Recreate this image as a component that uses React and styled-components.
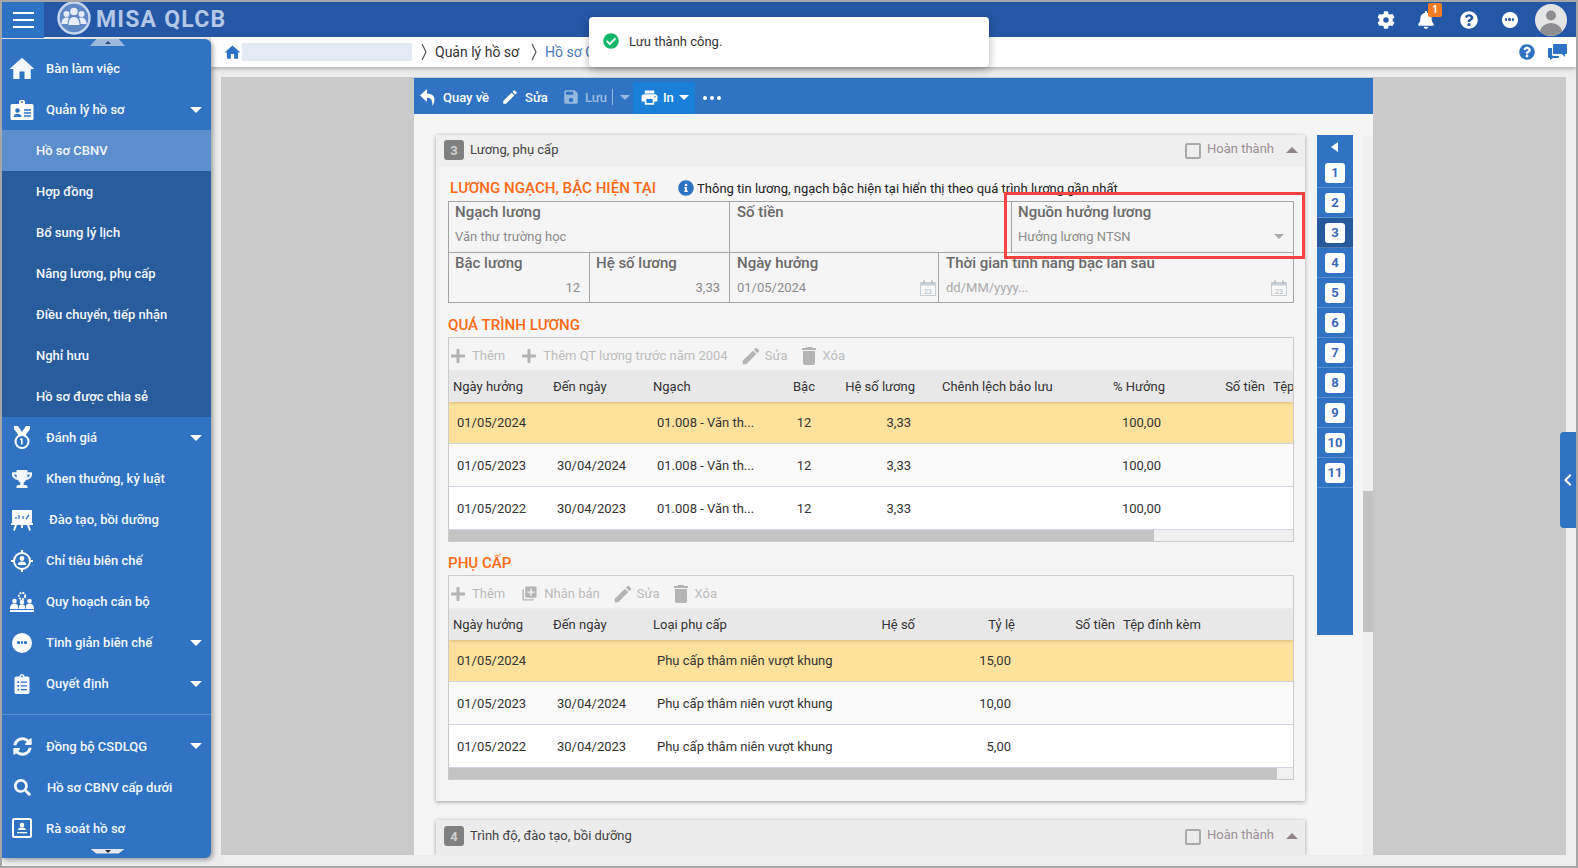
import styled, { createGlobalStyle } from "styled-components";
import {
  MdHome, MdEdit, MdSave, MdPrint, MdDelete, MdLibraryAdd, MdChevronLeft,
} from "react-icons/md";
import {
  FaTrophy, FaClipboardList, FaSyncAlt, FaSearch,
  FaPlus, FaCog, FaBell, FaQuestionCircle, FaCheckCircle, FaInfoCircle,
} from "react-icons/fa";

const GlobalStyle = createGlobalStyle`
  html, body { margin: 0; padding: 0; background: #fff; }
  body { font-family: Roboto, "Noto Sans", Arial, sans-serif; font-size: 13px; color: #333; }
  * { box-sizing: border-box; }
`;

const Frame = styled.div`
  width: 1578px;
  height: 868px;
  border: 2px solid #a6a6a6;
  display: flex;
  flex-direction: column;
  position: relative;
  overflow: hidden;
  background: #ededed;
`;

const Header = styled.header`
  height: 35px;
  flex: none;
  background: #2557a7;
  display: flex;
  align-items: flex-start;
  position: relative;
  z-index: 3;
`;

const Burger = styled.button`
  width: 42px;
  height: 36px;
  border: 0;
  padding: 0;
  background: #2e72c3;
  display: flex;
  flex-direction: column;
  align-items: center;
  justify-content: center;
  gap: 5px;
  span { width: 21px; height: 2px; background: #fff; }
`;

const Logo = styled.div`
  display: flex;
  align-items: center;
  height: 35px;
  margin-left: 13px;
  gap: 5px;
  font-size: 23px;
  font-weight: 700;
  letter-spacing: 1.2px;
  color: #b3c7e6;
  svg { margin-top: -3px; }
`;

const HeaderIcons = styled.div`
  margin-left: auto;
  display: flex;
  align-items: center;
  height: 35px;
  padding-right: 3px;
  color: #fff;
`;

const HeadIcon = styled.span`
  width: ${(p) => p.$w}px;
  display: flex;
  justify-content: center;
  position: relative;
`;

const CountBadge = styled.span`
  position: absolute;
  top: -8px;
  left: 24px;
  width: 14px;
  height: 14px;
  border-radius: 2px;
  background: #f47b20;
  color: #fff;
  font-size: 10px;
  font-weight: 700;
  text-align: center;
  line-height: 14px;
`;

const RoundDots = styled.span`
  width: ${(p) => p.$size}px;
  height: ${(p) => p.$size}px;
  border-radius: 50%;
  background: ${(p) => p.$bg};
  display: flex;
  align-items: center;
  justify-content: center;
  gap: 1px;
  i { width: 2.4px; height: 2.4px; border-radius: 50%; background: ${(p) => p.$fg}; }
`;

const Body = styled.div`
  flex: 1;
  display: flex;
  min-height: 0;
`;

const Sidebar = styled.nav`
  width: 209px;
  height: 819px;
  margin-top: 2px;
  flex: none;
  background: #2f73c2;
  color: #fff;
  border-radius: 0 6px 6px 0;
  box-shadow: 2px 2px 5px rgba(0, 0, 0, 0.35);
  position: relative;
  z-index: 2;
`;

const Scroller = styled.div`
  height: ${(p) => (p.$up ? 9 : 6)}px;
  display: flex;
  justify-content: center;
  align-items: flex-start;
  div {
    width: 35px;
    height: ${(p) => (p.$up ? 7 : 5)}px;
    background: ${(p) => (p.$up ? "#9cb8dc" : "#e4e8ee")};
    clip-path: ${(p) =>
      p.$up ? "polygon(18% 0, 82% 0, 100% 100%, 0 100%)" : "polygon(0 0, 100% 0, 82% 100%, 18% 100%)"};
    display: flex;
    align-items: center;
    justify-content: center;
    margin-left: 2px;
  }
  div::after {
    content: "";
    border-left: 3px solid transparent;
    border-right: 3px solid transparent;
    ${(p) => (p.$up ? "border-bottom: 3px solid #2a4a78;" : "border-top: 3px solid #2a2a2a;")}
  }
`;

const MenuRow = styled.div`
  height: 41px;
  display: flex;
  align-items: center;
  padding-right: 9px;
  font-size: 13px;
  font-weight: 500;
  color: #f4f8fd;
`;

const MenuIcon = styled.span`
  width: 40px;
  margin-right: 4px;
  display: flex;
  justify-content: center;
  align-items: center;
  flex: none;
`;

const MenuLabel = styled.span`
  margin-left: ${(p) => p.$nudge || 0}px;
`;

const Caret = styled.span`
  margin-left: auto;
  border-left: 6px solid transparent;
  border-right: 6px solid transparent;
  border-top: 6px solid #fff;
`;

const SubMenu = styled.div`
  background: #285c9c;
`;

const SubRow = styled.div`
  height: 41px;
  display: flex;
  align-items: center;
  padding-left: 34px;
  font-weight: 500;
  color: #f4f8fd;
  background: ${(p) => (p.$active ? "#5c8dcd" : "transparent")};
`;

const MenuDivider = styled.div`
  height: 1px;
  margin: 10px 0 10.5px;
  background: #5a8fce;
`;

const Main = styled.main`
  flex: 1;
  display: flex;
  flex-direction: column;
  min-width: 0;
`;

const Breadcrumb = styled.div`
  height: 30px;
  flex: none;
  background: #fff;
  box-shadow: 0 2px 4px rgba(0, 0, 0, 0.25);
  display: flex;
  align-items: center;
  padding: 0 9px 0 12px;
  color: #333;
  position: relative;
  z-index: 1;
`;

const Blurred = styled.div`
  width: 170px;
  height: 18px;
  margin: 0 9px 0 0;
  background: #e4eaf4;
`;

const Crumb = styled.span`
  margin: 0 12px 0 8px;
  font-size: 14px;
  color: ${(p) => p.$color};
`;

const CrumbTools = styled.div`
  margin-left: auto;
  display: flex;
  align-items: center;
  gap: 13px;
  color: #2e72c3;
`;

const Workspace = styled.div`
  flex: 1;
  min-height: 0;
  padding: 10px 10px 11px;
`;

const GrayArea = styled.div`
  height: 100%;
  background: #cacaca;
  padding-top: 1px;
  display: flex;
  justify-content: center;
`;

const Paper = styled.div`
  width: 959px;
  height: 777px;
  background: #f5f5f5;
  display: flex;
  flex-direction: column;
`;

const PaperBar = styled.div`
  height: 36px;
  flex: none;
  background: #2f73c2;
  display: flex;
  align-items: flex-end;
  padding-left: 5px;
  color: #fff;
`;

const BarBtn = styled.div`
  height: 32px;
  display: flex;
  align-items: center;
  gap: ${(p) => p.$gap ?? 6}px;
  margin-right: ${(p) => p.$mr ?? 0}px;
  padding: ${(p) => (p.$on ? "0 6px 2px 7px" : "0 0 2px")};
  background: ${(p) => (p.$on ? "#1a7fd9" : "transparent")};
  opacity: ${(p) => (p.$dim ? 0.5 : 1)};
  font-weight: 500;
`;

const BarCaret = styled.span`
  border-left: 5px solid transparent;
  border-right: 5px solid transparent;
  border-top: 5px solid #fff;
  margin-left: ${(p) => p.$ml || 0}px;
`;

const BarSep = styled.span`
  width: 1px;
  height: 16px;
  background: #fff;
`;

const BarDots = styled.div`
  height: 32px;
  display: flex;
  align-items: center;
  gap: 3px;
  margin-left: 8px;
  padding-bottom: 1px;
  i { width: 4px; height: 4px; border-radius: 50%; background: #fff; }
`;

const PaperBody = styled.div`
  flex: 1;
  min-height: 0;
  overflow: hidden;
  display: flex;
  align-items: flex-start;
  padding: 21px 0 0 22px;
`;

const CardColumn = styled.div`
  width: 869px;
  flex: none;
  position: relative;
`;

const Card = styled.section`
  background: #f5f5f5;
  box-shadow: 0 1px 4px rgba(0, 0, 0, 0.35);
  margin-bottom: 19px;
`;

const CardHead = styled.div`
  height: ${(p) => p.$h}px;
  background: ${(p) => p.$bg};
  display: flex;
  align-items: center;
  padding: 0 7px ${(p) => p.$pb}px 8px;
`;

const NumBadge = styled.span`
  width: 20px;
  height: 20px;
  border-radius: 3px;
  background: #808080;
  color: #d0d0d0;
  font-weight: 700;
  font-size: 13px;
  display: flex;
  align-items: center;
  justify-content: center;
  margin-right: 6px;
`;

const CardTitle = styled.span`
  color: #444;
  margin-top: -2px;
`;

const Done = styled.div`
  margin-left: auto;
  display: flex;
  align-items: center;
  color: #9a8f96;
  span { margin: 0 12px 0 6px; position: relative; top: -2px; }
`;

const Check = styled.i`
  width: 16px;
  height: 16px;
  margin-top: 2px;
  border: 2px solid #aaa;
  border-radius: 2px;
  display: block;
`;

const CaretUp = styled.i`
  border-left: 6px solid transparent;
  border-right: 6px solid transparent;
  border-bottom: 6px solid #90868a;
`;

const CardBody = styled.div`
  padding: 0 11px 21px 12px;
`;

const InfoRow = styled.div`
  height: 34px;
  padding: 8px 0 0 2px;
  display: flex;
  align-items: center;
`;

const SectionTitle = styled.h3`
  margin: 0;
  font-size: 15.1px;
  font-weight: 500;
  color: #ff6a13;
  white-space: nowrap;
`;

const SectionBar = styled.div`
  height: ${(p) => p.$h}px;
  padding-top: ${(p) => p.$pt}px;
  display: flex;
  align-items: center;
`;

const InfoNote = styled.div`
  margin-left: 22px;
  display: flex;
  align-items: center;
  gap: 3px;
  color: #222;
  svg { color: #2e72c3; }
`;

const FieldBox = styled.div`
  border: 1px solid #a4a4a4;
  border-bottom: 0;
`;

const FieldRow = styled.div`
  display: grid;
  grid-template-columns: ${(p) => p.$cols};
  height: 51px;
  border-bottom: 1px solid #a4a4a4;
  &:last-child { height: 50px; }
`;

const Field = styled.div`
  padding: 0 ${(p) => (p.$tight ? 2 : 6)}px 0 ${(p) => (p.$wide ? 7 : 6)}px;
  border-left: ${(p) => (p.$first ? "0" : "1px solid #a4a4a4")};
`;

const FieldLabel = styled.div`
  height: 22px;
  line-height: 21px;
  font-size: 15px;
  font-weight: 500;
  color: #6a6a6a;
  white-space: nowrap;
`;

const FieldValue = styled.div`
  height: 25px;
  display: flex;
  align-items: center;
  justify-content: ${(p) => (p.$right ? "flex-end" : "space-between")};
  padding-right: ${(p) => (p.$right ? 3 : 0)}px;
  color: ${(p) => (p.$faint ? "#aaa" : "#8c8c8c")};
`;

const SelectCaret = styled.i`
  border-left: 5px solid transparent;
  border-right: 5px solid transparent;
  border-top: 5px solid #aaa;
  margin-right: 3px;
`;

const Grid = styled.div`
  border: 1px solid #cbcbcb;
  overflow: hidden;
`;

const GridTools = styled.div`
  height: 33px;
  display: flex;
  align-items: center;
  padding: 2px 0 0 1px;
  color: #bcbcbc;
  svg { color: #b4b4b4; }
`;

const GridTool = styled.span`
  display: flex;
  align-items: center;
  gap: 6px;
  margin-right: 14px;
  &:first-child { margin-right: 16px; }
  &:nth-child(3) { margin-right: 13px; gap: 5px; }
`;

const PencilIcon = styled(MdEdit)`
  margin: 0 -2px;
`;

const TrashIcon = styled(MdDelete)`
  margin: 0 -4px;
`;

const GridHead = styled.div`
  height: 31px;
  display: grid;
  grid-template-columns: ${(p) => p.$cols};
  align-items: center;
  background: #e8e8e8;
  color: #333;
  white-space: nowrap;
  position: relative;
  box-shadow: 0 1px 3px rgba(120, 90, 30, 0.3);
`;

const HeadCell = styled.div`
  padding: 0 4px 0 ${(p) => p.$pl ?? 4}px;
  text-align: ${(p) => p.$align || "left"};
`;

const GridRow = styled.div`
  height: ${(p) => (p.$first ? 42 : 43)}px;
  display: grid;
  grid-template-columns: ${(p) => p.$cols};
  align-items: center;
  background: ${(p) => p.$bg};
  border-bottom: 1px solid #cfd6e2;
  color: #333;
  white-space: nowrap;
`;

const Cell = styled.div`
  padding: 0 ${(p) => (p.$flush ? 0 : 8)}px;
  text-align: ${(p) => p.$align || "left"};
`;

const HScroll = styled.div`
  height: 11px;
  background: #f0f0f0;
  div { height: 100%; width: ${(p) => p.$thumb}px; background: #c4c4c4; }
`;

const SectionNav = styled.aside`
  width: 36px;
  height: 500px;
  flex: none;
  margin-left: 12px;
  background: #2f73c2;
`;

const NavBack = styled.div`
  height: 23px;
  display: flex;
  align-items: center;
  justify-content: center;
  i {
    border-top: 5.5px solid transparent;
    border-bottom: 5.5px solid transparent;
    border-right: 7px solid #fff;
    margin-left: -2px;
  }
`;

const NavItem = styled.div`
  height: 30px;
  display: flex;
  align-items: center;
  justify-content: center;
  background: ${(p) => (p.$active ? "#265a9c" : "transparent")};
  border-bottom: 1px solid rgba(255, 255, 255, 0.2);
  span {
    width: 20px;
    height: 20px;
    border-radius: 3px;
    background: #fff;
    color: #3a68bb;
    font-weight: 700;
    font-size: 13px;
    display: flex;
    align-items: center;
    justify-content: center;
  }
`;

const ScrollStrip = styled.div`
  width: 10px;
  height: 720px;
  flex: none;
  margin: 0 0 0 10px;
  background: #f0f0f0;
  div { margin-top: 356px; height: 141px; background: #c3c3c3; }
`;

const Toast = styled.div`
  position: absolute;
  left: 587px;
  top: 15px;
  width: 400px;
  height: 50px;
  background: #fff;
  border-radius: 4px;
  box-shadow: 0 3px 10px rgba(0, 0, 0, 0.3);
  display: flex;
  align-items: center;
  gap: 10px;
  padding: 0 14px 2px;
  color: #333;
  z-index: 5;
  svg { color: #12b76a; }
`;

const RedBox = styled.div`
  position: absolute;
  left: 568px;
  top: 57px;
  width: 301px;
  height: 67px;
  border: 3px solid #f84242;
  pointer-events: none;
`;

const SideTab = styled.div`
  position: absolute;
  right: 0;
  top: 430px;
  width: 16px;
  height: 96px;
  background: #2f73c2;
  border-radius: 4px 0 0 4px;
  display: flex;
  align-items: center;
  justify-content: center;
  color: #fff;
  z-index: 4;
  svg { flex: none; }
`;

const BackArrow = () => (
  <svg width="18" height="20" viewBox="0 0 18 20" fill="#fff">
    <path d="M8 2 1 8.500 8 15v-4.200c3.500 0 5.500 1.500 5.500 8.200 3.500-6 3-12-5.500-12.500z" />
  </svg>
);

const IdCardIcon = () => (
  <svg width="24" height="22" viewBox="0 0 24 22">
    <path d="M9 5V2.500C9 1.500 10 1 12 1s3 .5 3 1.500V5h7a1.500 1.500 0 0 1 1.500 1.500v13A1.500 1.500 0 0 1 22 21H2a1.500 1.500 0 0 1-1.500-1.500v-13A1.500 1.500 0 0 1 2 5z" fill="#fff" />
    <circle cx="7.500" cy="11.500" r="2.300" fill="#2f73c2" />
    <path d="M3.500 18c.2-2.500 2-3.200 4-3.200s3.800.7 4 3.200z" fill="#2f73c2" />
    <path d="M14 11h7M14 14h7M14 17h7" stroke="#2f73c2" strokeWidth="1.300" />
    <circle cx="12" cy="3" r="1" fill="#2f73c2" />
  </svg>
);

const BoardIcon = () => (
  <svg width="22" height="22" viewBox="0 0 22 22">
    <rect x="1" y="1" width="20" height="13" rx="1" fill="#fff" />
    <path d="M5 10V8M8 10V6M12 10V7M15 10l3-4" stroke="#2f73c2" strokeWidth="1.300" />
    <rect x="0" y="14" width="22" height="2" fill="#fff" />
    <path d="M5 16l-2 5.500M17 16l2 5.500M11 16v3" stroke="#fff" strokeWidth="2" />
  </svg>
);

const TargetIcon = () => (
  <svg width="22" height="22" viewBox="0 0 22 22" fill="none">
    <circle cx="11" cy="11" r="8" stroke="#fff" strokeWidth="2" />
    <path d="M11 0v4M11 18v4M0 11h4M18 11h4" stroke="#fff" strokeWidth="2" />
    <circle cx="11" cy="8.500" r="2.400" fill="#fff" />
    <path d="M6.800 15c.3-2.800 2-3.600 4.200-3.600s3.900.8 4.200 3.600z" fill="#fff" />
  </svg>
);

const PlanIcon = () => (
  <svg width="24" height="22" viewBox="0 0 24 22" fill="#fff">
    <circle cx="12" cy="5" r="3.200" fill="none" stroke="#fff" strokeWidth="2" strokeDasharray="2 1" />
    <circle cx="4.500" cy="10" r="2.300" />
    <circle cx="19.500" cy="10" r="2.300" />
    <circle cx="12" cy="11" r="2.300" />
    <path d="M0 18c0-4 2-5.500 4.500-5.500S8 14 8 16v2zM16 18v-2c0-2 1-3.500 3.500-3.500S24 14 24 18zM8.500 18c0-3 1-4.800 3.500-4.800s3.500 1.800 3.500 4.800z" />
    <rect x="0" y="19" width="24" height="2" />
  </svg>
);

const MedalIcon = () => (
  <svg width="20" height="24" viewBox="0 0 20 24" fill="none">
    <path d="M2 0h4l4 6 4-6h4v3l-5 7H7L2 3z" fill="#fff" />
    <circle cx="10" cy="15.500" r="6.500" stroke="#fff" strokeWidth="2" />
    <path d="M9.800 12.500v6M8.300 13.800l1.500-1.300" stroke="#fff" strokeWidth="1.600" />
  </svg>
);

const ReviewIcon = () => (
  <svg width="20" height="20" viewBox="0 0 20 20" fill="none">
    <rect x="1" y="1" width="18" height="18" rx="1.500" stroke="#fff" strokeWidth="2" />
    <circle cx="10" cy="7" r="2.300" fill="#fff" />
    <path d="M6 12c.3-2 2-2.500 4-2.500s3.700.5 4 2.500zM5 14h10v1.300H5z" fill="#fff" />
  </svg>
);

const LogoMark = () => (
  <svg width="34" height="34" viewBox="0 0 34 34">
    <circle cx="17" cy="17" r="15.500" fill="#5f88c6" stroke="#c6d6ec" strokeWidth="2.500" />
    <g fill="#e6edf7">
      <circle cx="9.500" cy="13" r="3" />
      <circle cx="24.500" cy="13" r="3" />
      <circle cx="17" cy="10.500" r="3.800" />
      <path d="M4.500 23c0-4 2-6.500 5-6.500 1 0 2 .3 2.500 .8-1 1.500-1.500 3.500-1.500 5.700zM29.500 23c0-4-2-6.500-5-6.500-1 0-2 .3-2.500 .8 1 1.500 1.500 3.500 1.500 5.700zM11.500 24c0-5 2-8 5.500-8s5.500 3 5.500 8z" />
    </g>
  </svg>
);

const CalendarIcon = () => (
  <svg width="16" height="16" viewBox="0 0 16 16" fill="none">
    <rect x="0.500" y="2.500" width="15" height="13" stroke="#c8ced4" fill="#f8f8f8" />
    <rect x="0.500" y="2.500" width="15" height="3" fill="#c8ced4" />
    <path d="M4 0.500v3M12 0.500v3" stroke="#aeb4ba" strokeWidth="1.500" />
    <text x="8" y="13.500" fontSize="7" textAnchor="middle" fill="#aeb4ba" fontFamily="Roboto, sans-serif">23</text>
  </svg>
);

const CrumbArrow = ({ color }) => (
  <svg width="6" height="18" viewBox="0 0 6 18" fill="none">
    <path d="M1 1l4 8-4 8" stroke={color} strokeWidth="1.200" />
  </svg>
);

const ChatIcon = () => (
  <svg width="19" height="16" viewBox="0 0 19 16" fill="#2e72c3">
    <path d="M6 0h12a1 1 0 0 1 1 1v8a1 1 0 0 1-1 1h-1v3l-3-3H6a1 1 0 0 1-1-1V1a1 1 0 0 1 1-1z" />
    <path d="M1 4h3v6.500A1.500 1.500 0 0 0 5.500 12H11v1a1 1 0 0 1-1 1H5l-3 2v-2H1a1 1 0 0 1-1-1V5a1 1 0 0 1 1-1z" />
  </svg>
);

const AvatarIcon = () => (
  <svg width="32" height="32" viewBox="0 0 32 32">
    <defs>
      <clipPath id="avatarClip"><circle cx="16" cy="16" r="16" /></clipPath>
    </defs>
    <g clipPath="url(#avatarClip)">
      <rect width="32" height="32" fill="#e4e4e4" />
      <circle cx="16" cy="11.500" r="5" fill="#8e8e92" />
      <ellipse cx="16" cy="28" rx="11" ry="9" fill="#8e8e92" />
    </g>
  </svg>
);

const mainMenuTop = [
  { label: "Đánh giá", icon: <MedalIcon />, caret: true },
  { label: "Khen thưởng, kỷ luật", icon: <FaTrophy size={20} /> },
  { label: "Đào tạo, bồi dưỡng", icon: <BoardIcon />, nudge: 3 },
  { label: "Chỉ tiêu biên chế", icon: <TargetIcon /> },
  { label: "Quy hoạch cán bộ", icon: <PlanIcon /> },
  {
    label: "Tinh giản biên chế",
    icon: <RoundDots $size={20} $bg="#fff" $fg="#2f73c2"><i /><i /><i /></RoundDots>,
    caret: true,
  },
  { label: "Quyết định", icon: <FaClipboardList size={20} />, caret: true },
];

const mainMenuBottom = [
  { label: "Đồng bộ CSDLQG", icon: <FaSyncAlt size={19} />, caret: true },
  { label: "Hồ sơ CBNV cấp dưới", icon: <FaSearch size={17} />, nudge: 1 },
  { label: "Rà soát hồ sơ", icon: <ReviewIcon /> },
];

const subMenu = [
  "Hồ sơ CBNV", "Hợp đồng", "Bổ sung lý lịch", "Nâng lương, phụ cấp",
  "Điều chuyển, tiếp nhận", "Nghỉ hưu", "Hồ sơ được chia sẻ",
];

const salaryCols = "100px 100px 140px 30px 100px 150px 100px 100px 120px";
const allowanceCols = "100px 100px 211px 59px 100px 100px 174px";

const salaryRows = [
  ["01/05/2024", "", "#fee29c"],
  ["01/05/2023", "30/04/2024", "#fafafa"],
  ["01/05/2022", "30/04/2023", "#fff"],
];

const allowanceRows = [
  ["01/05/2024", "", "15,00", "#fee29c"],
  ["01/05/2023", "30/04/2024", "10,00", "#fafafa"],
  ["01/05/2022", "30/04/2023", "5,00", "#fff"],
];

const MenuItem = ({ item }) => (
  <MenuRow>
    <MenuIcon>{item.icon}</MenuIcon>
    <MenuLabel $nudge={item.nudge}>{item.label}</MenuLabel>
    {item.caret && <Caret />}
  </MenuRow>
);

const App = () => {
  return (
    <>
      <GlobalStyle />
      <Frame>
        <Header>
          <Burger><span /><span /><span /></Burger>
          <Logo><LogoMark />MISA QLCB</Logo>
          <HeaderIcons>
            <HeadIcon $w={37}><FaCog size={18} /></HeadIcon>
            <HeadIcon $w={43}>
              <FaBell size={18} />
              <CountBadge>1</CountBadge>
            </HeadIcon>
            <HeadIcon $w={44}><FaQuestionCircle size={18} /></HeadIcon>
            <HeadIcon $w={37}><RoundDots $size={16} $bg="#fff" $fg="#2557a7"><i /><i /><i /></RoundDots></HeadIcon>
            <HeadIcon $w={45}><AvatarIcon /></HeadIcon>
          </HeaderIcons>
        </Header>
        <Body>
          <Sidebar>
            <Scroller $up><div /></Scroller>
            <MenuItem item={{ label: "Bàn làm việc", icon: <MdHome size={30} /> }} />
            <MenuItem item={{ label: "Quản lý hồ sơ", icon: <IdCardIcon />, caret: true }} />
            <SubMenu>
              {subMenu.map((name, i) => (
                <SubRow key={name} $active={i === 0}>{name}</SubRow>
              ))}
            </SubMenu>
            {mainMenuTop.map((item) => <MenuItem key={item.label} item={item} />)}
            <MenuDivider />
            {mainMenuBottom.map((item) => <MenuItem key={item.label} item={item} />)}
            <Scroller><div /></Scroller>
          </Sidebar>
          <Main>
            <Breadcrumb>
              <MdHome size={19} color="#2e72c3" />
              <Blurred />
              <CrumbArrow color="#555" />
              <Crumb $color="#333">Quản lý hồ sơ</Crumb>
              <CrumbArrow color="#555" />
              <Crumb $color="#4a78c0">Hồ sơ CBNV</Crumb>
              <CrumbTools>
                <FaQuestionCircle size={16} />
                <ChatIcon />
              </CrumbTools>
            </Breadcrumb>
            <Workspace>
              <GrayArea>
                <Paper>
                  <PaperBar>
                    <BarBtn $mr={12}><BackArrow />Quay về</BarBtn>
                    <BarBtn $mr={14}><MdEdit size={18} />Sửa</BarBtn>
                    <BarBtn $dim $mr={3} $gap={5}>
                      <MdSave size={18} />Lưu
                      <BarSep />
                      <BarCaret $ml={2} />
                    </BarBtn>
                    <BarBtn $on $gap={4}>
                      <MdPrint size={19} />In
                      <BarCaret $ml={1} />
                    </BarBtn>
                    <BarDots><i /><i /><i /></BarDots>
                  </PaperBar>
                  <PaperBody>
                    <CardColumn>
                      <Card>
                        <CardHead $h={32} $bg="#efefef" $pb={2}>
                          <NumBadge>3</NumBadge>
                          <CardTitle>Lương, phụ cấp</CardTitle>
                          <Done><Check /><span>Hoàn thành</span><CaretUp /></Done>
                        </CardHead>
                        <CardBody>
                          <InfoRow>
                            <SectionTitle>LƯƠNG NGẠCH, BẬC HIỆN TẠI</SectionTitle>
                            <InfoNote>
                              <FaInfoCircle size={16} />
                              Thông tin lương, ngạch bậc hiện tại hiển thị theo quá trình lương gần nhất
                            </InfoNote>
                          </InfoRow>
                          <FieldBox>
                            <FieldRow $cols="280px 282px 1fr">
                              <Field $first>
                                <FieldLabel>Ngạch lương</FieldLabel>
                                <FieldValue>Văn thư trường học</FieldValue>
                              </Field>
                              <Field $wide>
                                <FieldLabel>Số tiền</FieldLabel>
                              </Field>
                              <Field>
                                <FieldLabel>Nguồn hưởng lương</FieldLabel>
                                <FieldValue>Hưởng lương NTSN<SelectCaret /></FieldValue>
                              </Field>
                            </FieldRow>
                            <FieldRow $cols="140px 140px 209px 1fr">
                              <Field $first>
                                <FieldLabel>Bậc lương</FieldLabel>
                                <FieldValue $right>12</FieldValue>
                              </Field>
                              <Field>
                                <FieldLabel>Hệ số lương</FieldLabel>
                                <FieldValue $right>3,33</FieldValue>
                              </Field>
                              <Field $tight $wide>
                                <FieldLabel>Ngày hưởng</FieldLabel>
                                <FieldValue>01/05/2024<CalendarIcon /></FieldValue>
                              </Field>
                              <Field $wide>
                                <FieldLabel>Thời gian tính nâng bậc lần sau</FieldLabel>
                                <FieldValue $faint>dd/MM/yyyy...<CalendarIcon /></FieldValue>
                              </Field>
                            </FieldRow>
                          </FieldBox>

                          <SectionBar $h={34} $pt={10}><SectionTitle>QUÁ TRÌNH LƯƠNG</SectionTitle></SectionBar>
                          <Grid>
                            <GridTools>
                              <GridTool><FaPlus size={16} />Thêm</GridTool>
                              <GridTool><FaPlus size={16} />Thêm QT lương trước năm 2004</GridTool>
                              <GridTool><PencilIcon size={22} />Sửa</GridTool>
                              <GridTool><TrashIcon size={24} />Xóa</GridTool>
                            </GridTools>
                            <GridHead $cols={salaryCols}>
                              <HeadCell>Ngày hưởng</HeadCell>
                              <HeadCell>Đến ngày</HeadCell>
                              <HeadCell>Ngạch</HeadCell>
                              <HeadCell $align="center">Bậc</HeadCell>
                              <HeadCell $align="right">Hệ số lương</HeadCell>
                              <HeadCell $pl={23}>Chênh lệch bảo lưu</HeadCell>
                              <HeadCell $align="right">% Hưởng</HeadCell>
                              <HeadCell $align="right">Số tiền</HeadCell>
                              <HeadCell>Tệp đính kèm</HeadCell>
                            </GridHead>
                            {salaryRows.map(([from, to, bg], i) => (
                              <GridRow key={from} $cols={salaryCols} $bg={bg} $first={i === 0}>
                                <Cell>{from}</Cell>
                                <Cell>{to}</Cell>
                                <Cell>01.008 - Văn th...</Cell>
                                <Cell $align="center" $flush>12</Cell>
                                <Cell $align="right">3,33</Cell>
                                <Cell />
                                <Cell $align="right">100,00</Cell>
                                <Cell />
                                <Cell />
                              </GridRow>
                            ))}
                            <HScroll $thumb={705}><div /></HScroll>
                          </Grid>

                          <SectionBar $h={33} $pt={8}><SectionTitle>PHỤ CẤP</SectionTitle></SectionBar>
                          <Grid>
                            <GridTools>
                              <GridTool><FaPlus size={16} />Thêm</GridTool>
                              <GridTool><MdLibraryAdd size={17} />Nhân bản</GridTool>
                              <GridTool><PencilIcon size={22} />Sửa</GridTool>
                              <GridTool><TrashIcon size={24} />Xóa</GridTool>
                            </GridTools>
                            <GridHead $cols={allowanceCols}>
                              <HeadCell>Ngày hưởng</HeadCell>
                              <HeadCell>Đến ngày</HeadCell>
                              <HeadCell>Loại phụ cấp</HeadCell>
                              <HeadCell $align="right">Hệ số</HeadCell>
                              <HeadCell $align="right">Tỷ lệ</HeadCell>
                              <HeadCell $align="right">Số tiền</HeadCell>
                              <HeadCell>Tệp đính kèm</HeadCell>
                            </GridHead>
                            {allowanceRows.map(([from, to, rate, bg], i) => (
                              <GridRow key={from} $cols={allowanceCols} $bg={bg} $first={i === 0}>
                                <Cell>{from}</Cell>
                                <Cell>{to}</Cell>
                                <Cell>Phụ cấp thâm niên vượt khung</Cell>
                                <Cell />
                                <Cell $align="right">{rate}</Cell>
                                <Cell />
                                <Cell />
                              </GridRow>
                            ))}
                            <HScroll $thumb={828}><div /></HScroll>
                          </Grid>
                        </CardBody>
                      </Card>
                      <Card>
                        <CardHead $h={35} $bg="#ececec" $pb={3}>
                          <NumBadge>4</NumBadge>
                          <CardTitle>Trình độ, đào tạo, bồi dưỡng</CardTitle>
                          <Done><Check /><span>Hoàn thành</span><CaretUp /></Done>
                        </CardHead>
                      </Card>
                      <RedBox />
                    </CardColumn>
                    <SectionNav>
                      <NavBack><i /></NavBack>
                      {[1, 2, 3, 4, 5, 6, 7, 8, 9, 10, 11].map((n) => (
                        <NavItem key={n} $active={n === 3}><span>{n}</span></NavItem>
                      ))}
                    </SectionNav>
                    <ScrollStrip><div /></ScrollStrip>
                  </PaperBody>
                </Paper>
              </GrayArea>
            </Workspace>
          </Main>
        </Body>
        <Toast>
          <FaCheckCircle size={16} />
          Lưu thành công.
        </Toast>
        <SideTab><MdChevronLeft size={24} /></SideTab>
      </Frame>
    </>
  );
};

export default App;
